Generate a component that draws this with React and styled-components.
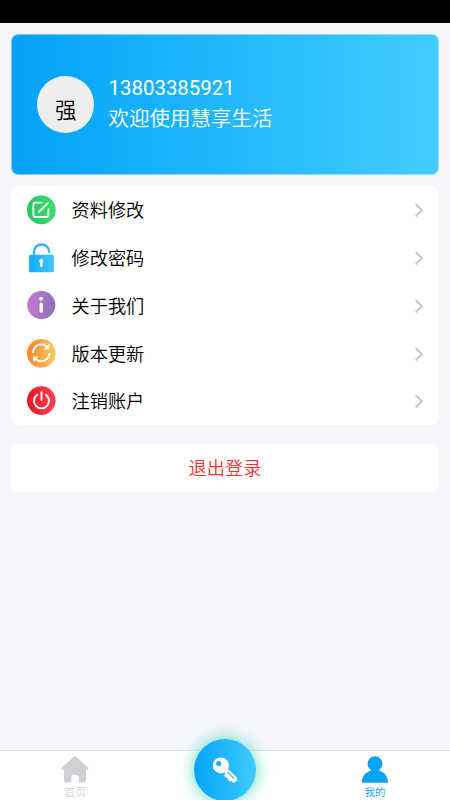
import React from "react";
import styled, { createGlobalStyle } from "styled-components";

const GlobalStyle = createGlobalStyle`
  * {
    box-sizing: border-box;
  }
  body {
    margin: 0;
    background: #f5f6fb;
    font-family: Roboto, "Noto Sans CJK SC", sans-serif;
  }
  svg {
    flex-shrink: 0;
  }
`;

const EditIcon = () => (
  <svg width="30" height="30" viewBox="0 0 30 30" fill="none">
    <defs>
      <linearGradient id="edit" x1="0" x2="1">
        <stop offset="0" stopColor="#25c768" />
        <stop offset="1" stopColor="#3edc68" />
      </linearGradient>
    </defs>
    <circle cx="15.3" cy="14.9" r="14.4" fill="url(#edit)" />
    <g stroke="#fff" strokeWidth="1.8" strokeLinecap="round">
      <path d="M15.4 7.6H9.3Q7.4 7.6 7.4 9.5V20.1Q7.4 22 9.3 22H20.5Q22.4 22 22.4 20.1V14.3" />
      <path d="M12.9 17L22 8" />
    </g>
  </svg>
);

const LockIcon = () => (
  <svg width="30" height="30" viewBox="0 0 30 30" fill="none">
    <defs>
      <linearGradient id="lock" x1="0" x2="1">
        <stop offset="0" stopColor="#16aafa" />
        <stop offset="1" stopColor="#40c7ff" />
      </linearGradient>
    </defs>
    <path
      d="M8.1 13V8.6C8.1 4.4 11.2 1.5 15.5 1.5C19.8 1.5 23.1 4.5 23.1 8.8"
      stroke="#29b6fc"
      strokeWidth="2.3"
      strokeLinecap="round"
    />
    <rect x="3.1" y="11.7" width="24.8" height="17.6" rx="1.5" fill="url(#lock)" />
    <path
      d="M15.3 15.7a2.3 2.3 0 0 1 1.3 4v3.1a1.3 1.3 0 0 1-2.6 0v-3.1a2.3 2.3 0 0 1 1.3-4z"
      fill="#fff"
    />
  </svg>
);

const InfoIcon = () => (
  <svg width="30" height="30" viewBox="0 0 30 30" fill="none">
    <defs>
      <linearGradient id="info" x1="0" x2="1">
        <stop offset="0" stopColor="#c17bd4" />
        <stop offset="1" stopColor="#9070b8" />
      </linearGradient>
    </defs>
    <circle cx="15.3" cy="14.1" r="14.1" fill="url(#info)" />
    <circle cx="15.2" cy="7.7" r="1.9" fill="#fff" />
    <path d="M15.2 13.2V20.2" stroke="#fff" strokeWidth="3.3" strokeLinecap="round" />
  </svg>
);

const UpdateIcon = () => (
  <svg width="30" height="30" viewBox="0 0 30 30" fill="none">
    <defs>
      <linearGradient id="update" x1="0" x2="1">
        <stop offset="0" stopColor="#ff812b" />
        <stop offset="1" stopColor="#f8cf60" />
      </linearGradient>
    </defs>
    <circle cx="15.3" cy="14.3" r="14.3" fill="url(#update)" />
    <g stroke="#fff" strokeWidth="1.9" strokeLinecap="round">
      <path d="M7.1 13.3C7.4 8.7 10.9 5.4 15.1 5.4C17.9 5.4 20 6.6 21.7 8.5" />
      <path d="M23.4 14.6C23.1 19.2 19.6 22.3 15.4 22.3C12.6 22.3 10.5 21.2 8.9 19.3" />
    </g>
    <path d="M23.2 4.8V10.4H17.8z" fill="#fff" />
    <path d="M7.2 23V17.4H12.6z" fill="#fff" />
  </svg>
);

const PowerIcon = () => (
  <svg width="30" height="30" viewBox="0 0 30 30" fill="none">
    <defs>
      <linearGradient id="power" x1="0" x2="1">
        <stop offset="0" stopColor="#e71524" />
        <stop offset="1" stopColor="#ff4354" />
      </linearGradient>
    </defs>
    <circle cx="15.3" cy="14.6" r="14.3" fill="url(#power)" />
    <g stroke="#fff" strokeWidth="1.9" strokeLinecap="round">
      <path d="M15.5 6.2V13.9" />
      <path d="M11.3 8.7A7.5 7.5 0 1 0 19.7 8.7" />
    </g>
  </svg>
);

const Chevron = () => (
  <svg width="10" height="16" viewBox="0 0 10 16" fill="none">
    <path d="M1.7 2.2L8 8.2L1.7 14.2" stroke="#c6c6ca" strokeWidth="1.9" />
  </svg>
);

const HomeIcon = () => (
  <svg width="28" height="28" viewBox="0 0 28 28" fill="#d0d1d6">
    <path d="M12.7 0.8Q14 -0.2 15.3 0.8L27 11.6Q27.7 12.4 26.9 13.3Q26.2 14 25.2 13.4H25V24Q25 26.6 22.4 26.6H17.9V22Q17.9 18.6 14 18.6Q10.3 18.6 10.3 22V26.6H5.6Q3 26.6 3 24V13.4H2.8Q1.8 14 1.1 13.3Q0.3 12.4 1 11.6Z" />
  </svg>
);

const UserIcon = () => (
  <svg width="28" height="28" viewBox="0 0 28 28" fill="#05a3f7">
    <circle cx="14" cy="7.7" r="7.4" />
    <path d="M0.9 26.7C0.9 20 4.8 16 9.8 14.4L11.2 12.4H16.8L18.2 14.4C23.2 16 27.1 20 27.1 26.7Z" />
  </svg>
);

const KeyIcon = () => (
  <svg width="28" height="28" viewBox="0 0 28 28" fill="none">
    <path
      d="M16.6 12.6L26.2 22V24.2L23.8 26.4H21.8L20.2 24.8L18.6 25.4L17.1 24L17.3 22.4L14.6 21.6L13.4 19.8L14.2 17.2L12.8 15.4Z"
      fill="#fff"
    />
    <circle cx="9.9" cy="9.4" r="8" fill="#fff" />
    <circle cx="7.7" cy="7.6" r="2.6" fill="#22b0fb" />
    <path d="M16.6 16.2L22.8 22.4" stroke="#22b0fb" strokeWidth="1.1" />
  </svg>
);

const menu = [
  { label: "资料修改", Icon: EditIcon },
  { label: "修改密码", Icon: LockIcon },
  { label: "关于我们", Icon: InfoIcon },
  { label: "版本更新", Icon: UpdateIcon },
  { label: "注销账户", Icon: PowerIcon },
];

const App = () => {
  return (
    <>
      <GlobalStyle />
      <Page>
        <StatusBar />
        <Content>
          <ProfileCard>
            <Avatar>强</Avatar>
            <ProfileText>
              <Phone>13803385921</Phone>
              <Welcome>欢迎使用慧享生活</Welcome>
            </ProfileText>
          </ProfileCard>
          <MenuList>
            {menu.map(({ label, Icon }) => (
              <MenuItem key={label}>
                <Icon />
                <MenuLabel>{label}</MenuLabel>
                <Chevron />
              </MenuItem>
            ))}
          </MenuList>
          <LogoutButton>退出登录</LogoutButton>
        </Content>
        <TabBar>
          <Tab>
            <HomeIcon />
            首页
          </Tab>
          <KeySlot>
            <KeyButton>
              <KeyIcon />
            </KeyButton>
          </KeySlot>
          <Tab $active>
            <UserIcon />
            我的
          </Tab>
        </TabBar>
      </Page>
    </>
  );
};

const Page = styled.div`
  display: flex;
  flex-direction: column;
  width: 450px;
  height: 800px;
  overflow: hidden;
  background: #f5f6fb;
  font-weight: 350;
`;

const StatusBar = styled.div`
  height: 23px;
  flex-shrink: 0;
  background: #000;
`;

const Content = styled.div`
  flex: 1;
  padding: 11.4px 11px 0;
`;

const ProfileCard = styled.div`
  display: flex;
  align-items: center;
  height: 140.6px;
  padding-left: 25.4px;
  border: 1px solid rgba(245, 246, 251, 0.5);
  border-radius: 7px;
  background: linear-gradient(90deg, #03a2f7, #41cdff) border-box;
`;

const Avatar = styled.div`
  width: 56.6px;
  height: 56.6px;
  margin-right: 14.6px;
  padding-top: 9.5px;
  border-radius: 50%;
  background: #eeeef0;
  color: #000;
  font-size: 21.5px;
  line-height: 50px;
  text-align: center;
`;

const ProfileText = styled.div`
  padding-bottom: 0;
`;

const Phone = styled.div`
  color: #fff;
  font-size: 20.4px;
  font-weight: 400;
  line-height: 29px;
`;

const Welcome = styled.div`
  color: #fff;
  font-size: 20.5px;
  line-height: 32px;
`;

const MenuList = styled.div`
  margin-top: 11px;
  border-radius: 8px;
  background: #fff;
`;

const MenuItem = styled.div`
  display: flex;
  align-items: center;
  height: 47.9px;
  padding: 0 15px;
`;

const MenuLabel = styled.div`
  flex: 1;
  margin-left: 15.5px;
  padding-top: 2px;
  color: #000;
  font-size: 18.2px;
  line-height: 26px;
`;

const LogoutButton = styled.button`
  display: block;
  width: 428px;
  height: 48px;
  margin-top: 18.5px;
  padding: 0 0 2px;
  border: 0;
  border-radius: 8px;
  background: #fff;
  color: #f43530;
  font-family: inherit;
  font-size: 18.2px;
  font-weight: inherit;
`;

const TabBar = styled.div`
  display: flex;
  flex-shrink: 0;
  height: 50px;
  border-top: 1px solid #e4e5e9;
  background: #fff;
`;

const Tab = styled.div`
  display: flex;
  flex: 1;
  flex-direction: column;
  align-items: center;
  padding-top: 5px;
  color: ${(props) => (props.$active ? "#05a3f7" : "#d0d1d6")};
  font-size: 10.5px;
  line-height: 17px;
`;

const KeySlot = styled.div`
  display: flex;
  flex: 1;
  justify-content: center;
`;

const KeyButton = styled.div`
  display: flex;
  align-items: center;
  justify-content: center;
  width: 62px;
  height: 62px;
  margin-top: -12.5px;
  border-radius: 50%;
  background: linear-gradient(90deg, #06a4f7, #3fcbff);
  box-shadow: 0 0 16px rgba(30, 205, 175, 0.75);
`;

export default App;
